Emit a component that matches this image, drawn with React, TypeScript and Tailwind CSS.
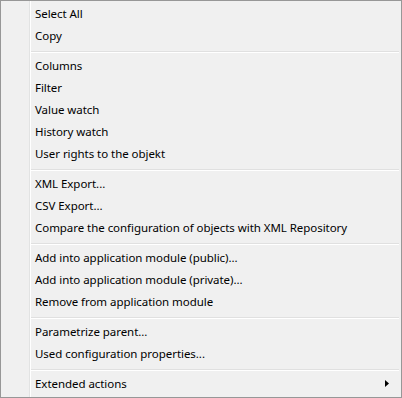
const groups: string[][] = [
  ["Select All", "Copy"],
  ["Columns", "Filter", "Value watch", "History watch", "User rights to the objekt"],
  ["XML Export...", "CSV Export...", "Compare the configuration of objects with XML Repository"],
  ["Add into application module (public)...", "Add into application module (private)...", "Remove from application module"],
  ["Parametrize parent...", "Used configuration properties..."],
];

const Item = ({ label, sub }: { label: string; sub?: boolean }) => (
  <div className="h-[22px] flex items-center pl-[4px] pr-[12px] pt-px">
    <span className="flex-1 leading-[22px] tracking-[-0.05px]">{label}</span>
    {sub && (
      <svg width="4" height="7" viewBox="0 0 4 7">
        <polygon points="0,0 4,3.5 0,7" fill="#000" />
      </svg>
    )}
  </div>
);

const Separator = () => (
  <div className="h-[8px] flex flex-col pt-[5px] pr-[2px]">
    <div className="h-px bg-[#e0e0e0]" />
    <div className="h-px bg-white" />
  </div>
);

export default function App() {
  return (
    <div
      className="w-[402px] h-[398px] border border-[#979797] bg-[#f0f0f0] flex text-[11.5px] text-black select-none"
      style={{ fontFamily: '"Noto Sans", "Open Sans", sans-serif' }}
    >
      <div className="w-[28px]" />
      <div className="w-px bg-[#e2e3e3]" />
      <div className="w-px bg-white" />
      <div className="flex-1 flex flex-col pt-px">
        {groups.map((g, i) => (
          <div key={i}>
            {g.map((l) => (
              <Item key={l} label={l} />
            ))}
            <Separator />
          </div>
        ))}
        <Item label="Extended actions" sub />
      </div>
    </div>
  );
}
